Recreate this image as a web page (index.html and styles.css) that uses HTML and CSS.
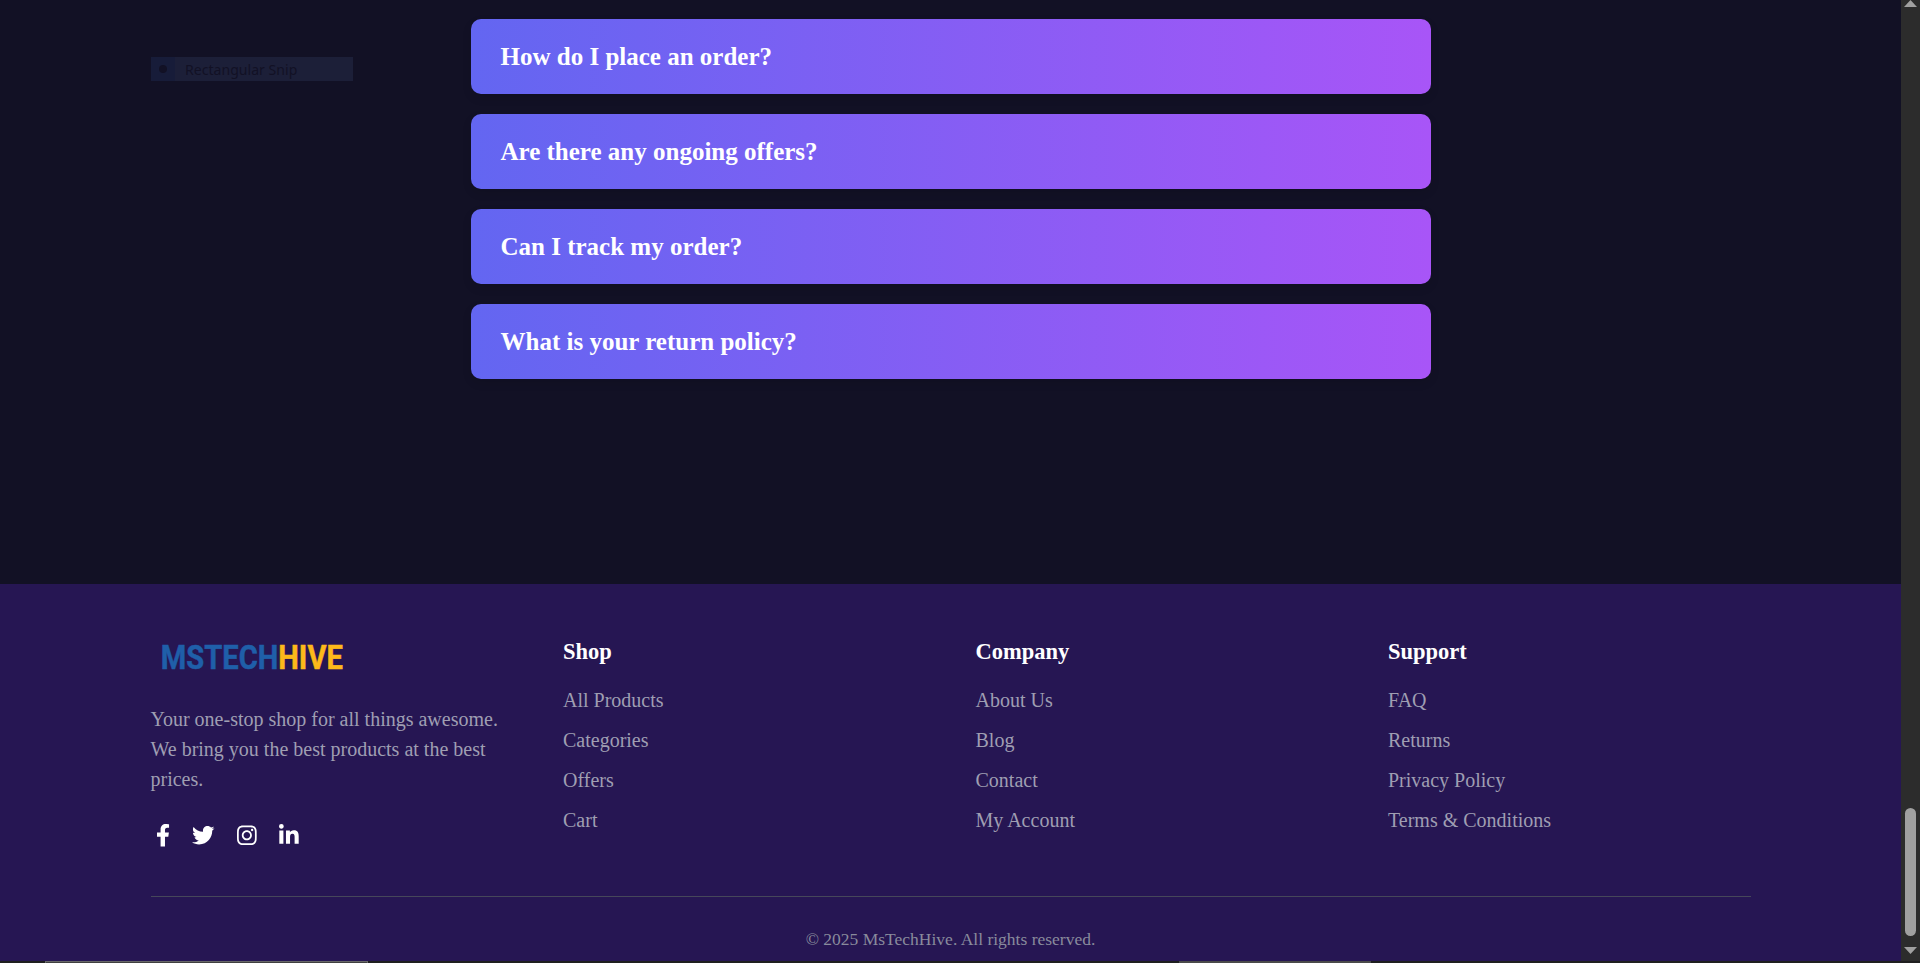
FILE: index.html
```html
<!DOCTYPE html>
<html lang="en">
<head>
<meta charset="utf-8">
<title>MsTechHive</title>
<link rel="stylesheet" href="styles.css">
</head>
<body>
<div class="window">
  <div class="page">
    <main class="faq">
      <div class="faq-item">How do I place an order?</div>
      <div class="faq-item">Are there any ongoing offers?</div>
      <div class="faq-item">Can I track my order?</div>
      <div class="faq-item">What is your return policy?</div>
    </main>
    <footer class="footer">
      <div class="footer-columns">
        <section class="brand">
          <svg class="logo" width="200" height="60" viewBox="0 0 200 60">
            <text x="9.8" y="41.4" textLength="182" lengthAdjust="spacingAndGlyphs"><tspan class="logo-tech">MSTECH</tspan><tspan class="logo-hive">HIVE</tspan></text>
          </svg>
          <p class="tagline">Your one-stop shop for all things awesome. We bring you the best products at the best prices.</p>
          <div class="social">
            <svg class="icon" viewBox="0 0 320 512"><path d="M279.14 288l14.22-92.66h-88.91v-60.13c0-25.35 12.42-50.06 52.24-50.06h40.42V6.26S260.43 0 225.36 0c-73.22 0-121.08 44.38-121.08 124.72v70.62H22.89V288h81.39v224h100.17V288z"/></svg>
            <svg class="icon" viewBox="0 0 512 512"><path d="M459.37 151.716c.325 4.548.325 9.097.325 13.645 0 138.72-105.583 298.558-298.558 298.558-59.452 0-114.68-17.219-161.137-47.106 8.447.974 16.568 1.299 25.34 1.299 49.055 0 94.213-16.568 130.274-44.832-46.132-.975-84.792-31.188-98.112-72.772 6.498.974 12.995 1.624 19.818 1.624 9.421 0 18.843-1.3 27.614-3.573-48.081-9.747-84.143-51.98-84.143-102.985v-1.299c13.969 7.797 30.214 12.67 47.431 13.319-28.264-18.843-46.781-51.005-46.781-87.391 0-19.492 5.197-37.36 14.294-52.954 51.655 63.675 129.3 105.258 216.365 109.807-1.624-7.797-2.599-15.918-2.599-24.04 0-57.828 46.782-104.934 104.934-104.934 30.213 0 57.502 12.67 76.67 33.137 23.715-4.548 46.456-13.32 66.599-25.34-7.798 24.366-24.366 44.833-46.132 57.827 21.117-2.273 41.584-8.122 60.426-16.243-14.292 20.791-32.161 39.308-52.628 54.253z"/></svg>
            <svg class="icon" viewBox="0 0 448 512"><path d="M224.1 141c-63.6 0-114.9 51.3-114.9 114.9s51.3 114.9 114.9 114.9S339 319.5 339 255.9 287.7 141 224.1 141zm0 189.6c-41.1 0-74.7-33.5-74.7-74.7s33.5-74.7 74.7-74.7 74.7 33.5 74.7 74.7-33.6 74.7-74.7 74.7zm146.4-194.3c0 14.9-12 26.8-26.8 26.8-14.9 0-26.8-12-26.8-26.8s12-26.8 26.8-26.8 26.8 12 26.8 26.8zm76.1 27.2c-1.7-35.9-9.9-67.7-36.2-93.9-26.2-26.2-58-34.4-93.9-36.2-37-2.1-147.900-2.1-184.9 0-35.8 1.7-67.6 9.9-93.9 36.1s-34.4 58-36.2 93.9c-2.1 37-2.1 147.9 0 184.9 1.7 35.9 9.9 67.7 36.2 93.9s58 34.4 93.9 36.2c37 2.1 147.9 2.1 184.9 0 35.9-1.7 67.7-9.9 93.9-36.2 26.2-26.2 34.4-58 36.2-93.9 2.1-37 2.1-147.8 0-184.8zM398.8 388c-7.8 19.6-22.9 34.7-42.6 42.6-29.5 11.7-99.5 9-132.1 9s-102.7 2.6-132.1-9c-19.6-7.8-34.7-22.9-42.6-42.6-11.7-29.5-9-99.5-9-132.1s-2.6-102.7 9-132.1c7.8-19.6 22.9-34.7 42.6-42.6 29.5-11.7 99.5-9 132.1-9s102.7-2.6 132.1 9c19.6 7.8 34.7 22.9 42.6 42.6 11.7 29.5 9 99.5 9 132.1s2.7 102.7-9 132.1z"/></svg>
            <svg class="icon" viewBox="0 0 448 512"><path d="M100.28 448H7.4V148.9h92.88zM53.79 108.1C24.09 108.1 0 83.5 0 53.8a53.79 53.79 0 0 1 107.58 0c0 29.7-24.1 54.3-53.79 54.3zM447.9 448h-92.68V302.4c0-34.7-.7-79.2-48.29-79.2-48.29 0-55.69 37.7-55.69 76.7V448h-92.78V148.9h89.08v40.8h1.3c12.4-23.5 42.69-48.3 87.88-48.3 94 0 111.28 61.9 111.28 142.3V448z"/></svg>
          </div>
        </section>
        <section>
          <h3 class="heading">Shop</h3>
          <ul class="links"><li>All Products</li><li>Categories</li><li>Offers</li><li>Cart</li></ul>
        </section>
        <section>
          <h3 class="heading">Company</h3>
          <ul class="links"><li>About Us</li><li>Blog</li><li>Contact</li><li>My Account</li></ul>
        </section>
        <section>
          <h3 class="heading">Support</h3>
          <ul class="links"><li>FAQ</li><li>Returns</li><li>Privacy Policy</li><li>Terms &amp; Conditions</li></ul>
        </section>
      </div>
      <div class="copyright">© 2025 MsTechHive. All rights reserved.</div>
    </footer>
  </div>
  <div class="scrollbar">
    <svg width="13" height="7" viewBox="0 0 13 7"><path d="M6.5 0L13 7H0z"/></svg>
    <div class="thumb"></div>
    <svg class="down" width="13" height="7" viewBox="0 0 13 7"><path d="M0 0h13L6.5 7z"/></svg>
  </div>
</div>
<div class="taskbar"><div class="task task-open"></div><div class="task task-idle"></div></div>
<div class="snip"><span class="snip-mark"><span class="snip-dot"></span></span><span class="snip-label">Rectangular Snip</span></div>
</body>
</html>
```
FILE: styles.css
```css
* { box-sizing: border-box; }
body {
  margin: 0;
  height: 963px;
  overflow: hidden;
  display: flex;
  flex-direction: column;
  background: #121125;
  font-family: "Liberation Serif", "Times New Roman", serif;
}
.window { display: flex; height: 961px; }
.page { flex: 1; display: flex; flex-direction: column; }
.faq {
  width: 960px;
  height: 584px;
  margin: 0 auto;
  padding-top: 19px;
  display: flex;
  flex-direction: column;
  gap: 20px;
}
.faq-item {
  height: 75px;
  padding: 0 30px;
  display: flex;
  align-items: center;
  border-radius: 10px;
  background: linear-gradient(90deg, #6366f1, #a855f7);
  box-shadow: 0 4px 10px rgba(0, 0, 0, 0.1);
  color: #fff;
  font-size: 25px;
  font-weight: 700;
}
.footer { flex: 1; padding: 50px 150.5px 0; background: #261653; }
.footer-columns {
  height: 262px;
  display: grid;
  grid-template-columns: repeat(4, 1fr);
  gap: 50px;
}
.logo {
  display: block;
  margin-top: -6px;
  font-family: Roboto, sans-serif;
  font-size: 33px;
  font-weight: 700;
  line-height: 1;
  stroke-width: 0.5;
}
.logo-tech { fill: #1f5fa9; stroke: #1f5fa9; }
.logo-hive { fill: #fdb91a; stroke: #fdb91a; }
.tagline { margin: 16px 0 30px; font-size: 20px; line-height: 30px; color: #9f9eb2; }
.social { display: flex; gap: 22.5px; padding-left: 5px; }
.icon { height: 22.5px; fill: #fff; }
.heading { margin: 4px 0 22px; font-size: 22.5px; line-height: 28px; color: #fff; }
.links { margin: 0; padding: 0; list-style: none; font-size: 20px; line-height: 25px; color: #9f9eb2; }
.links li { margin-bottom: 15px; }
.copyright {
  border-top: 1px solid #46475a;
  padding-top: 31px;
  text-align: center;
  font-size: 17.5px;
  line-height: 22px;
  color: #898b9c;
}
.scrollbar {
  width: 19px;
  background: #2c2c2c;
  display: flex;
  flex-direction: column;
  align-items: center;
  fill: #a0a0a0;
}
.thumb { width: 11px; height: 128px; margin-top: 801px; border-radius: 6px; background: #a0a0a0; }
.down { margin-top: 11px; }
.taskbar { height: 2px; display: flex; background: #1f1f1f; padding-left: 45px; gap: 811px; }
.task { height: 2px; }
.task-open { width: 323px; background: #404040; border: 1px solid #686868; border-bottom: 0; }
.task-idle { width: 192px; background: #4a4a4a; }
.snip {
  position: absolute;
  left: 151px;
  top: 57px;
  width: 202px;
  height: 24px;
  display: flex;
  background: #1c1f38;
  color: #121125;
  font: 14.1px/25px "Noto Sans", sans-serif;
}
.snip-mark { width: 24px; display: flex; align-items: center; justify-content: center; background: #171c39; }
.snip-dot { width: 8px; height: 8px; border-radius: 4px; background: #121125; }
.snip-label { margin-left: 10px; }
```
